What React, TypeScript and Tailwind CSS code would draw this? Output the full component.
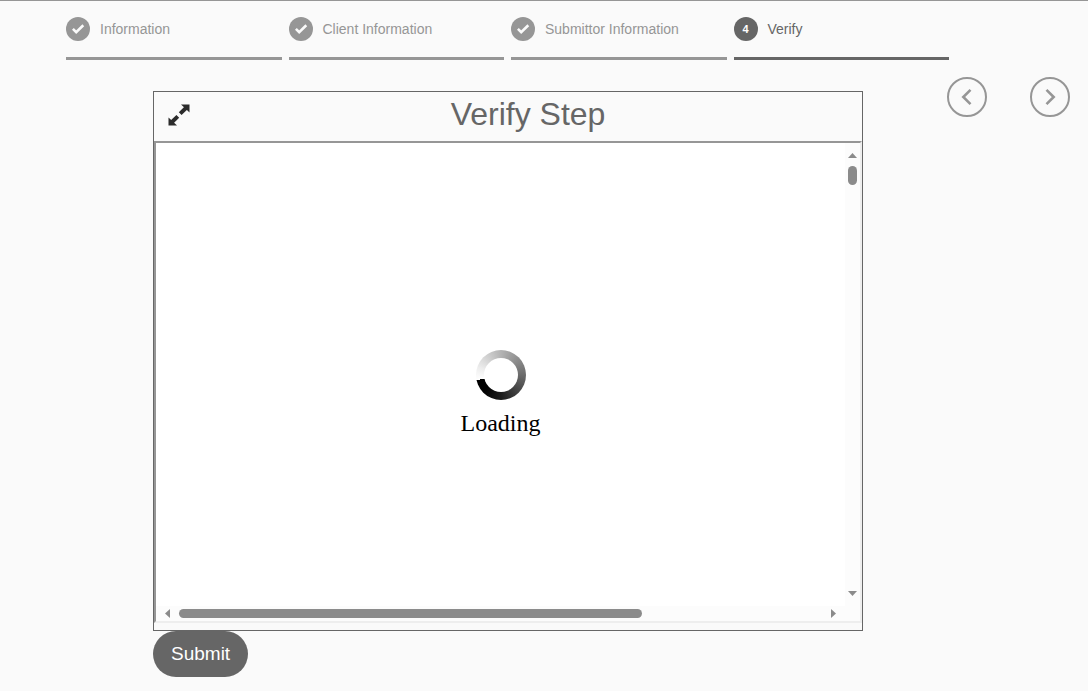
import { clsx } from "clsx";

const steps = [
  { label: "Information", done: true },
  { label: "Client Information", done: true },
  { label: "Submittor Information", done: true },
  { label: "Verify", done: false },
];

function CheckIcon() {
  return (
    <svg width="24" height="24" viewBox="0 0 24 24" fill="none" aria-hidden="true">
      <path d="M6.9 11.9 10.2 15.1 17.3 8.2" stroke="#fafafa" strokeWidth="2.6" />
    </svg>
  );
}

function ExpandIcon() {
  return (
    <svg width="22" height="22" viewBox="0 0 22 22" fill="#2b2b2b" aria-hidden="true">
      <path d="M13 .5H21.5V8.5Z" />
      <path d="M.5 13.5V21.5H9Z" />
      <path d="M12.2 9.6 18 4M9.8 12.4 4 18" stroke="#2b2b2b" strokeWidth="4" />
    </svg>
  );
}

function Arrow({ path, size }: { path: string; size: "wide" | "tall" }) {
  const w = size === "wide" ? 9 : 5;
  const h = size === "wide" ? 5 : 9;
  return (
    <svg width={w} height={h} viewBox={`0 0 ${w} ${h}`} fill="#8b8b8b" className="shrink-0" aria-hidden="true">
      <path d={path} />
    </svg>
  );
}

function Stepper() {
  return (
    <nav aria-label="Progress" className="pl-[66px] pr-[139px]">
      <ol className="flex gap-[7px]">
        {steps.map((step, index) => (
          <li
            key={step.label}
            aria-current={step.done ? undefined : "step"}
            className={clsx(
              "flex flex-1 items-center gap-2.5 border-b-3 py-4 text-sm leading-6 whitespace-nowrap",
              step.done ? "border-[#969696] text-[#969696]" : "border-[#666] text-[#666]"
            )}
          >
            <span
              className={clsx(
                "flex size-6 shrink-0 items-center justify-center rounded-full text-[11px] font-bold text-white",
                step.done ? "bg-[#969696]" : "bg-[#666]"
              )}
            >
              {step.done ? <CheckIcon /> : index + 1}
            </span>
            {step.label}
          </li>
        ))}
      </ol>
    </nav>
  );
}

function NavButton({ label, path }: { label: string; path: string }) {
  return (
    <button
      type="button"
      aria-label={label}
      className="flex size-10 items-center justify-center rounded-full border-2 border-[#969696]"
    >
      <svg width="24" height="24" viewBox="0 0 24 24" fill="none" aria-hidden="true">
        <path d={path} stroke="#969696" strokeWidth="2.6" />
      </svg>
    </button>
  );
}

function Viewer() {
  return (
    <div className="border-2 border-t-[#969696] border-r-[#eee] border-b-[#eee] border-l-[#969696] bg-white">
      <div className="flex">
        <div
          role="status"
          className="flex h-[463px] flex-1 flex-col items-center pt-[207px] font-['Liberation_Serif',serif] text-2xl text-black"
        >
          <div className="flex size-[50px] items-center justify-center rounded-full bg-[conic-gradient(from_258deg,#fff_0%,#eee_8%,#b4b4b4_28%,#6c6c6c_53%,#1c1c1c_78%,#000_92%)]">
            <div className="size-[34px] rounded-full bg-white" />
          </div>
          <p className="mt-[7px] leading-8">Loading</p>
        </div>
        <div className="flex w-[15px] flex-col items-center bg-[#fcfcfc] py-2.5">
          <Arrow path="M0 5 4.5 0 9 5Z" size="wide" />
          <div className="mt-2 h-[19px] w-[9px] rounded-full bg-[#8b8b8b]" />
          <div className="mt-auto">
            <Arrow path="M0 0 4.5 5 9 0Z" size="wide" />
          </div>
        </div>
      </div>
      <div className="flex h-[15px] items-center gap-[9px] bg-[#fcfcfc] pr-6 pl-[9px]">
        <Arrow path="M5 0 0 4.5 5 9Z" size="tall" />
        <div className="flex-1">
          <div className="h-[9px] w-[72%] rounded-full bg-[#8b8b8b]" />
        </div>
        <Arrow path="M0 0 5 4.5 0 9Z" size="tall" />
      </div>
    </div>
  );
}

export default function App() {
  return (
    <div className="min-h-screen border-t border-[#969696] bg-[#fafafa] font-['Liberation_Sans',Arial,sans-serif]">
      <Stepper />
      <div className="flex items-start pr-[18px] pl-[153px]">
        <main className="mt-[31px] flex-1">
          <section className="border border-[#666] pb-[7px]">
            <header className="flex h-[49px] items-center pb-1 pl-[14px]">
              <button type="button" aria-label="Expand" className="shrink-0">
                <ExpandIcon />
              </button>
              <h1 className="flex-1 pl-1 text-center text-[32px] leading-[45px] text-[#666]">
                Verify Step
              </h1>
            </header>
            <Viewer />
          </section>
          <button
            type="submit"
            className="block h-[46px] rounded-full bg-[#666] px-[18px] text-[19px] text-white"
          >
            Submit
          </button>
        </main>
        <div className="mt-[17px] ml-[84px] flex gap-[43px]">
          <NavButton label="Previous" path="M15.5 4.8 8.3 12 15.5 19.2" />
          <NavButton label="Next" path="M8.5 4.8 15.7 12 8.5 19.2" />
        </div>
      </div>
    </div>
  );
}
